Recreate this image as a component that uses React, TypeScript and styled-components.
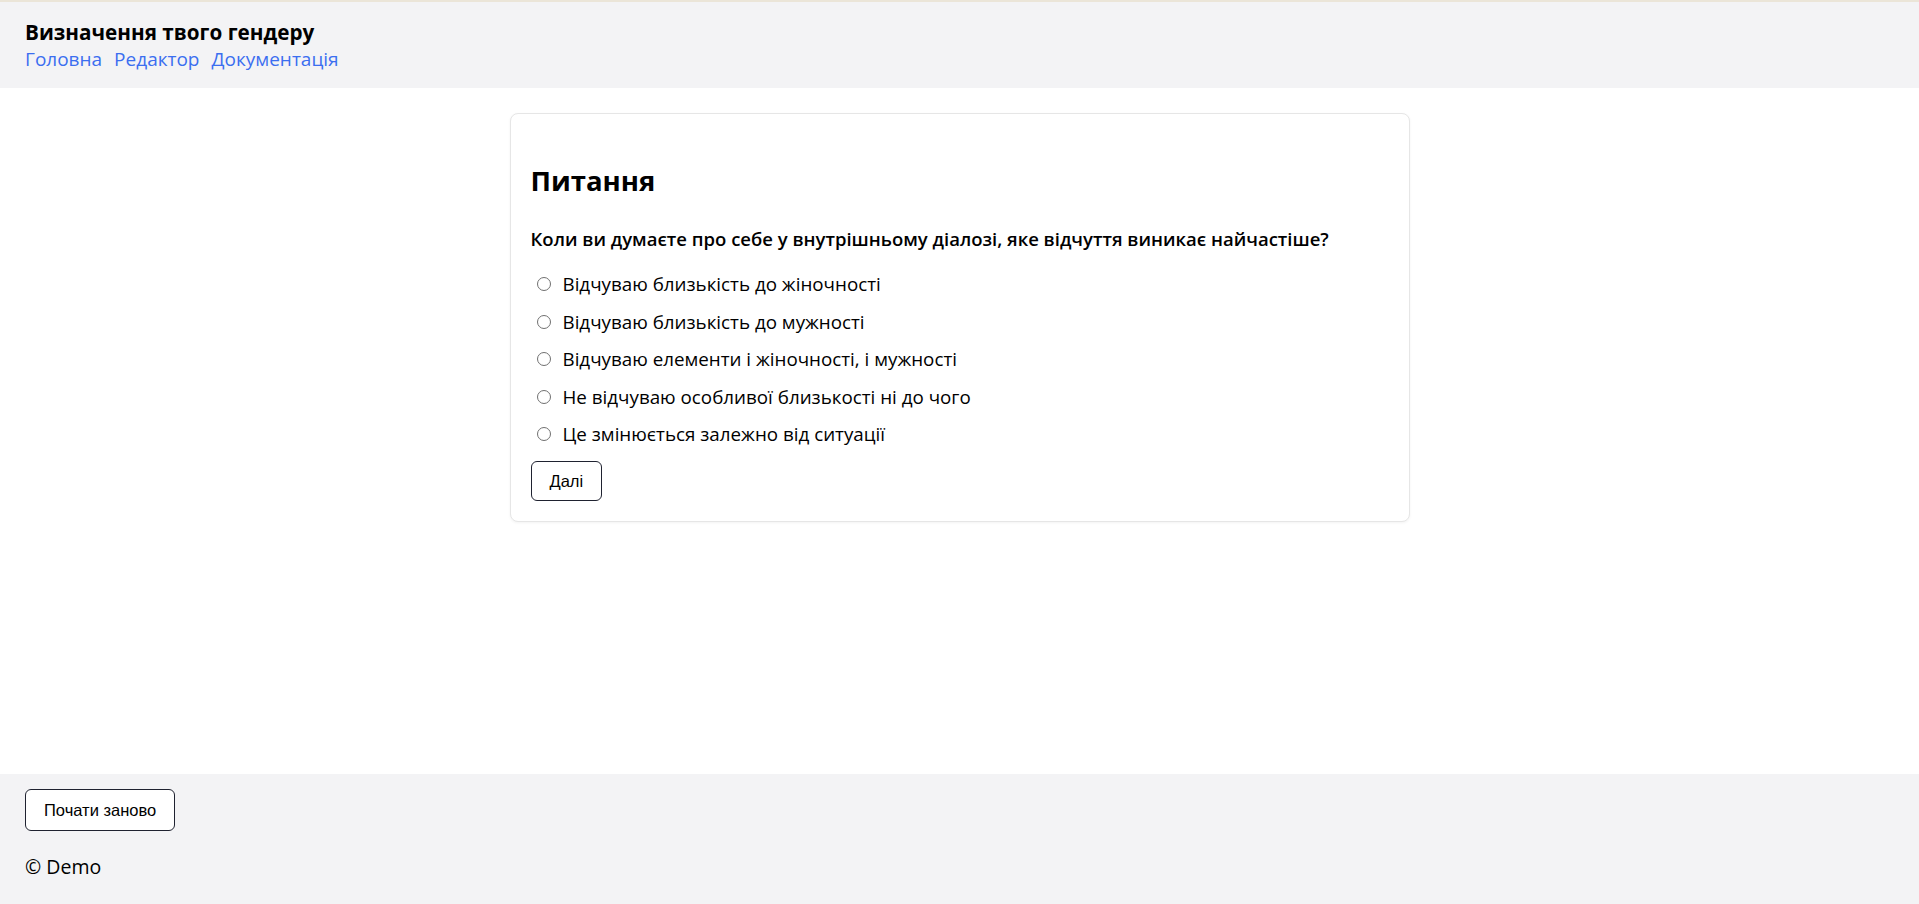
import React from "react";
import styled, { createGlobalStyle } from "styled-components";

const GlobalStyle = createGlobalStyle`
  html, body { margin: 0; padding: 0; }
  body {
    font-family: "Segoe UI", "Open Sans", "Noto Sans", sans-serif;
    color: #000;
    background: #fff;
  }
  #root { min-height: 100vh; }
`;

const Page = styled.div`
  min-height: 100vh;
  display: flex;
  flex-direction: column;
`;

const Header = styled.header`
  background: #f3f3f5;
  border-top: 2px solid #ebe5d8;
  padding: 16px 25px 16px;
`;

const SiteTitle = styled.h1`
  margin: 0;
  font-size: 20.7px;
  font-weight: 700;
  line-height: 28px;
`;

const Nav = styled.nav`
  display: flex;
  gap: 12px;
`;

const NavLink = styled.a`
  color: #3b6ef0;
  text-decoration: none;
  font-size: 19px;
  line-height: 26px;
`;

const Main = styled.main`
  flex: 1;
  padding: 25px 16px;
`;

const Card = styled.section`
  max-width: 858px;
  margin: 0 auto;
  padding: 20px;
  background: #fff;
  border: 1px solid #e6e6e6;
  border-radius: 8px;
  box-shadow: 0 1px 3px rgba(0, 0, 0, 0.05);
`;

const Heading = styled.h2`
  margin: 28px 0 0;
  font-size: 27.5px;
  font-weight: 700;
  line-height: 38px;
`;

const Question = styled.p`
  margin: 26px 0 19px;
  font-size: 18.5px;
  font-weight: 600;
  line-height: 26px;
`;

const Options = styled.div`
  display: flex;
  flex-direction: column;
  gap: 11.5px;
`;

const Option = styled.label`
  display: flex;
  align-items: center;
  font-size: 18.8px;
  line-height: 26px;
  cursor: pointer;
`;

const Radio = styled.input`
  appearance: none;
  box-sizing: border-box;
  width: 14px;
  height: 14px;
  margin: 0 12px 0 6px;
  border: 1px solid #707070;
  border-radius: 50%;
  background: #fff;
  flex: none;
  &:checked {
    border: 4px solid #1a73e8;
  }
`;

const Button = styled.button<{ $h?: number }>`
  font-family: "Liberation Sans", Arial, sans-serif;
  font-size: 16.5px;
  color: #000;
  background: #fff;
  border: 1px solid #1f2230;
  border-radius: 6px;
  padding: 0 18px;
  height: ${(p) => p.$h ?? 40}px;
  cursor: pointer;
`;

const NextButton = styled(Button)`
  margin-top: 14px;
`;

const Footer = styled.footer`
  background: #f3f3f5;
  padding: 15px 25px 23px;
`;

const Copy = styled.p`
  margin: 22px 0 0;
  font-size: 19.5px;
  line-height: 28px;
`;

const options = [
  "Відчуваю близькість до жіночності",
  "Відчуваю близькість до мужності",
  "Відчуваю елементи і жіночності, і мужності",
  "Не відчуваю особливої близькості ні до чого",
  "Це змінюється залежно від ситуації",
];

export default function App() {
  return (
    <>
      <GlobalStyle />
      <Page>
        <Header>
          <SiteTitle>Визначення твого гендеру</SiteTitle>
          <Nav>
            <NavLink href="#">Головна</NavLink>
            <NavLink href="#">Редактор</NavLink>
            <NavLink href="#">Документація</NavLink>
          </Nav>
        </Header>
        <Main>
          <Card>
            <Heading>Питання</Heading>
            <Question>
              Коли ви думаєте про себе у внутрішньому діалозі, яке відчуття виникає найчастіше?
            </Question>
            <Options>
              {options.map((o) => (
                <Option key={o}>
                  <Radio type="radio" name="q" />
                  {o}
                </Option>
              ))}
            </Options>
            <NextButton>Далі</NextButton>
          </Card>
        </Main>
        <Footer>
          <Button $h={42}>Почати заново</Button>
          <Copy>© Demo</Copy>
        </Footer>
      </Page>
    </>
  );
}
